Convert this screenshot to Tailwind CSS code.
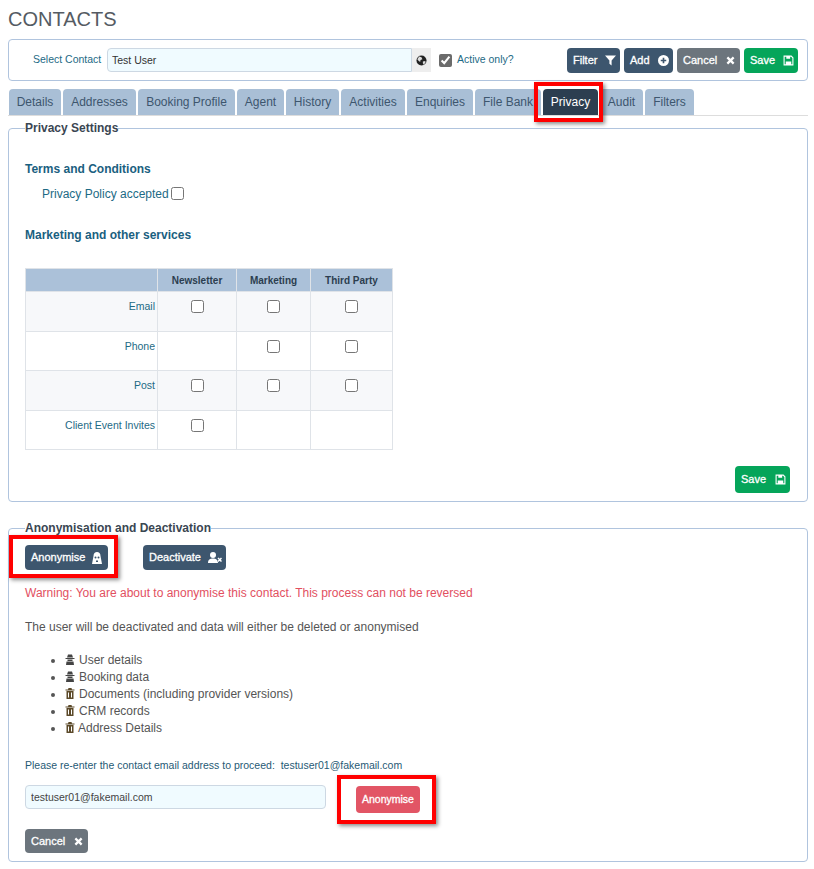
<!DOCTYPE html>
<html>
  <head>
    <meta charset="utf-8" />
    <title>Contacts</title>
    <script src="https://cdn.jsdelivr.net/npm/@tailwindcss/browser@4"></script>
  </head>
  <body class="relative bg-white h-[869px] overflow-hidden font-['Liberation_Sans',Arial,sans-serif] text-[12px] text-[#1d6a85]">
    <div class="pl-2 pr-1.5">
      <h1 class="text-[20px] leading-[23px] pt-2 text-[#555b63]">CONTACTS</h1>

      <!-- Contact selector -->
      <div class="mt-[8px] h-[42px] border border-[#b0c4de] rounded flex items-center pl-6 pr-[9px] text-[10.5px]">
        <label class="w-[68px] shrink-0 whitespace-nowrap">Select Contact</label>
        <div class="ml-1.5 flex h-[24px] w-[324px] shrink-0">
          <input value="Test User" class="w-[305px] h-full pl-1 bg-[#f0fbff] border border-[#cdd8e3] rounded-l text-[#333] text-[10.5px]" />
          <span class="w-[19px] bg-[#eee] flex items-center justify-center">
            <svg class="w-[11px] h-[11px]" viewBox="0 0 24 24"><circle cx="12" cy="12" r="11" fill="#222" /><path d="M7 3l5 2 2 4-4 2-1 4-4-3-2-3zM15 14l5-1 1 3-4 5-2-3z" fill="#ddd" /></svg>
          </span>
        </div>
        <input type="checkbox" checked class="ml-2 w-[13px] h-[13px] accent-[#6b6b6b]" />
        <span class="ml-[5px]">Active only?</span>
        <div class="ml-auto flex gap-1">
          <button class="h-[25px] w-[53px] rounded bg-[#3d566e] text-white text-[11px] [-webkit-text-stroke:0.3px_#fff] flex items-center justify-between pl-1.5 pr-[4px]">
            Filter
            <svg class="w-[11px] h-[11px]" viewBox="0 0 20 20" fill="#fff"><path d="M0 1h20l-8 9v9l-4-3v-6z" /></svg>
          </button>
          <button class="h-[25px] w-[49px] rounded bg-[#3d566e] text-white text-[11px] [-webkit-text-stroke:0.3px_#fff] flex items-center justify-between pl-1.5 pr-[4px]">
            Add
            <svg class="w-[11px] h-[11px]" viewBox="0 0 20 20"><circle cx="10" cy="10" r="10" fill="#fff" /><path d="M10 5v10M5 10h10" stroke="#3d566e" stroke-width="3" /></svg>
          </button>
          <button class="h-[25px] w-[63px] rounded bg-[#6c757d] text-white text-[11px] [-webkit-text-stroke:0.3px_#fff] flex items-center justify-between pl-1.5 pr-[5px]">
            Cancel
            <svg class="w-[9px] h-[9px]" viewBox="0 0 20 20"><path d="M3 3l14 14M17 3L3 17" stroke="#fff" stroke-width="5" /></svg>
          </button>
          <button class="h-[25px] w-[54px] rounded bg-[#05a55a] text-white text-[11px] [-webkit-text-stroke:0.3px_#fff] flex items-center justify-between pl-1.5 pr-[4px]">
            Save
            <svg class="w-[11px] h-[11px]" viewBox="0 0 20 20" fill="none"><path d="M2 2h13l3 3v13H2z" stroke="#fff" stroke-width="2" /><path d="M6 2h7v5H6zM5 12h10v6H5z" fill="#fff" /></svg>
          </button>
        </div>
      </div>

      <!-- Tabs -->
      <div class="mt-2 h-[27px] border-b border-[#ddd] flex gap-[2px] pl-px text-[12px] text-[#3d566e]">
        <a class="h-[26px] w-[52px] bg-[#a9bfd6] rounded-t flex items-center justify-center">Details</a>
        <a class="h-[26px] w-[73px] bg-[#a9bfd6] rounded-t flex items-center justify-center">Addresses</a>
        <a class="h-[26px] w-[97px] bg-[#a9bfd6] rounded-t flex items-center justify-center">Booking Profile</a>
        <a class="h-[26px] w-[47px] bg-[#a9bfd6] rounded-t flex items-center justify-center">Agent</a>
        <a class="h-[26px] w-[53px] bg-[#a9bfd6] rounded-t flex items-center justify-center">History</a>
        <a class="h-[26px] w-[64px] bg-[#a9bfd6] rounded-t flex items-center justify-center">Activities</a>
        <a class="h-[26px] w-[66px] bg-[#a9bfd6] rounded-t flex items-center justify-center">Enquiries</a>
        <a class="h-[26px] w-[66px] bg-[#a9bfd6] rounded-t flex items-center justify-center">File Bank</a>
        <a class="h-[26px] w-[55px] bg-[#2c3e50] rounded-t flex items-center justify-center text-white">Privacy</a>
        <a class="h-[26px] w-[43px] bg-[#a9bfd6] rounded-t flex items-center justify-center">Audit</a>
        <a class="h-[26px] w-[49px] bg-[#a9bfd6] rounded-t flex items-center justify-center">Filters</a>
      </div>

      <!-- Privacy settings -->
      <fieldset class="mt-[5px] h-[381px] border border-[#b0c4de] rounded px-4">
        <legend class="font-bold text-[#3a4652] leading-[14px]">Privacy Settings</legend>
        <h3 class="mt-[27px] font-bold text-[#1a6080] leading-[14px]">Terms and Conditions</h3>
        <div class="mt-[11px] ml-[17px] flex items-center h-[14px]">
          <span>Privacy Policy accepted</span>
          <input type="checkbox" class="ml-[2px] -mt-[1px] w-[13px] h-[13px]" />
        </div>
        <h3 class="mt-[27px] font-bold text-[#1a6080] leading-[14px]">Marketing and other services</h3>
        <table class="mt-[26px] w-[368px] table-fixed border-collapse">
          <colgroup>
            <col class="w-[132px]" /><col class="w-[79px]" /><col class="w-[74px]" /><col />
          </colgroup>
          <thead>
            <tr class="h-[23px] bg-[#abc1d9] text-[10px] text-[#2c3e50]">
              <th class="border border-[#dfe3e8] font-bold"></th>
              <th class="border border-[#dfe3e8] font-bold">Newsletter</th>
              <th class="border border-[#dfe3e8] font-bold">Marketing</th>
              <th class="border border-[#dfe3e8] font-bold">Third Party</th>
            </tr>
          </thead>
          <tbody class="text-[10.5px] leading-[14px]">
            <tr class="h-[40px] bg-[#f7f8fa]">
              <td class="border border-[#dfe3e8] align-top text-right pr-[2px] pt-[7px]">Email</td>
              <td class="border border-[#dfe3e8] align-top text-center pt-[8px]"><input type="checkbox" class="w-[13px] h-[13px]" /></td>
              <td class="border border-[#dfe3e8] align-top text-center pt-[8px]"><input type="checkbox" class="w-[13px] h-[13px]" /></td>
              <td class="border border-[#dfe3e8] align-top text-center pt-[8px]"><input type="checkbox" class="w-[13px] h-[13px]" /></td>
            </tr>
            <tr class="h-[39px]">
              <td class="border border-[#dfe3e8] align-top text-right pr-[2px] pt-[7px]">Phone</td>
              <td class="border border-[#dfe3e8]"></td>
              <td class="border border-[#dfe3e8] align-top text-center pt-[8px]"><input type="checkbox" class="w-[13px] h-[13px]" /></td>
              <td class="border border-[#dfe3e8] align-top text-center pt-[8px]"><input type="checkbox" class="w-[13px] h-[13px]" /></td>
            </tr>
            <tr class="h-[40px] bg-[#f7f8fa]">
              <td class="border border-[#dfe3e8] align-top text-right pr-[2px] pt-[7px]">Post</td>
              <td class="border border-[#dfe3e8] align-top text-center pt-[8px]"><input type="checkbox" class="w-[13px] h-[13px]" /></td>
              <td class="border border-[#dfe3e8] align-top text-center pt-[8px]"><input type="checkbox" class="w-[13px] h-[13px]" /></td>
              <td class="border border-[#dfe3e8] align-top text-center pt-[8px]"><input type="checkbox" class="w-[13px] h-[13px]" /></td>
            </tr>
            <tr class="h-[39px]">
              <td class="border border-[#dfe3e8] align-top text-right pr-[2px] pt-[7px]">Client Event Invites</td>
              <td class="border border-[#dfe3e8] align-top text-center pt-[8px]"><input type="checkbox" class="w-[13px] h-[13px]" /></td>
              <td class="border border-[#dfe3e8]"></td>
              <td class="border border-[#dfe3e8]"></td>
            </tr>
          </tbody>
        </table>
        <div class="mt-[16px] mr-px flex justify-end">
          <button class="h-[27px] w-[55px] rounded bg-[#05a55a] text-white text-[11px] [-webkit-text-stroke:0.3px_#fff] flex items-center justify-between pl-1.5 pr-[4px]">
            Save
            <svg class="w-[11px] h-[11px]" viewBox="0 0 20 20" fill="none"><path d="M2 2h13l3 3v13H2z" stroke="#fff" stroke-width="2" /><path d="M6 2h7v5H6zM5 12h10v6H5z" fill="#fff" /></svg>
          </button>
        </div>
      </fieldset>

      <!-- Anonymisation -->
      <fieldset class="mt-[19px] h-[341px] border border-[#b0c4de] rounded px-4">
        <legend class="font-bold text-[#3a4652] leading-[14px]">Anonymisation and Deactivation</legend>
        <div class="mt-[10px] flex gap-[35px]">
          <button class="h-[25px] w-[83px] rounded bg-[#3d566e] text-white text-[11px] [-webkit-text-stroke:0.3px_#fff] flex items-center justify-between pl-1.5 pr-1.5">
            Anonymise
            <svg class="w-[10px] h-[12px]" viewBox="0 0 20 24" fill="#fff"><path d="M3 8c0-5 3-8 7-8s7 3 7 8l3 16H0z" /><circle cx="7" cy="11" r="2" fill="#3d566e" /><circle cx="13" cy="11" r="2" fill="#3d566e" /><path d="M8 17h4v3H8z" fill="#3d566e" /></svg>
          </button>
          <button class="h-[25px] w-[83px] rounded bg-[#3d566e] text-white text-[11px] [-webkit-text-stroke:0.3px_#fff] flex items-center justify-between pl-1.5 pr-1">
            Deactivate
            <svg class="w-[14px] h-[11px]" viewBox="0 0 28 22" fill="#fff"><circle cx="10" cy="6" r="6" /><path d="M0 22c0-7 4-9 10-9s9 2 10 9z" /><path d="M20 12l7 7M27 12l-7 7" stroke="#fff" stroke-width="3" /></svg>
          </button>
        </div>
        <p class="mt-[16px] text-[#e2505f] leading-[14px]">Warning: You are about to anonymise this contact. This process can not be reversed</p>
        <p class="mt-[20px] text-[#555] leading-[14px]">The user will be deactivated and data will either be deleted or anonymised</p>
        <ul class="mt-[18px] ml-[40px] list-disc text-[#555] leading-[17px]">
          <li><svg class="inline w-[10px] h-[11px] mr-[4px] align-[-1px]" viewBox="0 0 20 22" fill="#444"><path d="M6 1h8l2 6H4zM1 8h18v2H1zM5 11h10v3H5zM3 15h14l1 7H2z" /></svg>User details</li>
          <li><svg class="inline w-[10px] h-[11px] mr-[4px] align-[-1px]" viewBox="0 0 20 22" fill="#444"><path d="M6 1h8l2 6H4zM1 8h18v2H1zM5 11h10v3H5zM3 15h14l1 7H2z" /></svg>Booking data</li>
          <li><svg class="inline w-[10px] h-[11px] mr-[4px] align-[-1px]" viewBox="0 0 20 22" fill="#5c4a2a"><path d="M7 0h6l1 3h5v2H1V3h5zM3 6h14v16H3zM6 9v10h2V9zM12 9v10h2V9z" fill-rule="evenodd" /></svg>Documents (including provider versions)</li>
          <li><svg class="inline w-[10px] h-[11px] mr-[4px] align-[-1px]" viewBox="0 0 20 22" fill="#5c4a2a"><path d="M7 0h6l1 3h5v2H1V3h5zM3 6h14v16H3zM6 9v10h2V9zM12 9v10h2V9z" fill-rule="evenodd" /></svg>CRM records</li>
          <li><svg class="inline w-[10px] h-[11px] mr-[3px] align-[-1px]" viewBox="0 0 20 22" fill="#5c4a2a"><path d="M7 0h6l1 3h5v2H1V3h5zM3 6h14v16H3zM6 9v10h2V9zM12 9v10h2V9z" fill-rule="evenodd" /></svg>Address Details</li>
        </ul>
        <p class="mt-[21px] text-[10.5px] leading-[14px] text-[#1f5a75]">Please re-enter the contact email address to proceed:&nbsp; testuser01@fakemail.com</p>
        <div class="mt-[13px] flex items-start gap-[30px]">
          <input value="testuser01@fakemail.com" class="w-[301px] h-[24px] pl-[5px] bg-[#f0fbff] border border-[#cdd8e3] rounded text-[#444] text-[10.5px]" />
          <button class="mt-px h-[27px] w-[64px] rounded bg-[#e25565] text-white text-[10.5px] [-webkit-text-stroke:0.3px_#fff]">Anonymise</button>
        </div>
        <button class="mt-[16px] h-[24px] w-[63px] rounded bg-[#6c757d] text-white text-[11px] [-webkit-text-stroke:0.3px_#fff] flex items-center justify-between pl-1.5 pr-[5px]">
          Cancel
          <svg class="w-[9px] h-[9px]" viewBox="0 0 20 20"><path d="M3 3l14 14M17 3L3 17" stroke="#fff" stroke-width="5" /></svg>
        </button>
      </fieldset>
    </div>

    <!-- Red annotation boxes -->
    <div class="absolute left-[534px] top-[82px] w-[69px] h-[40px] border-[4px] border-[#f00] shadow-[2px_2px_4px_rgba(0,0,0,0.45)]"></div>
    <div class="absolute left-[9px] top-[535px] w-[109px] h-[43px] border-[4px] border-[#f00] shadow-[2px_2px_4px_rgba(0,0,0,0.45)]"></div>
    <div class="absolute left-[337px] top-[775px] w-[99px] h-[49px] border-[4px] border-[#f00] shadow-[2px_2px_4px_rgba(0,0,0,0.45)]"></div>
  </body>
</html>
